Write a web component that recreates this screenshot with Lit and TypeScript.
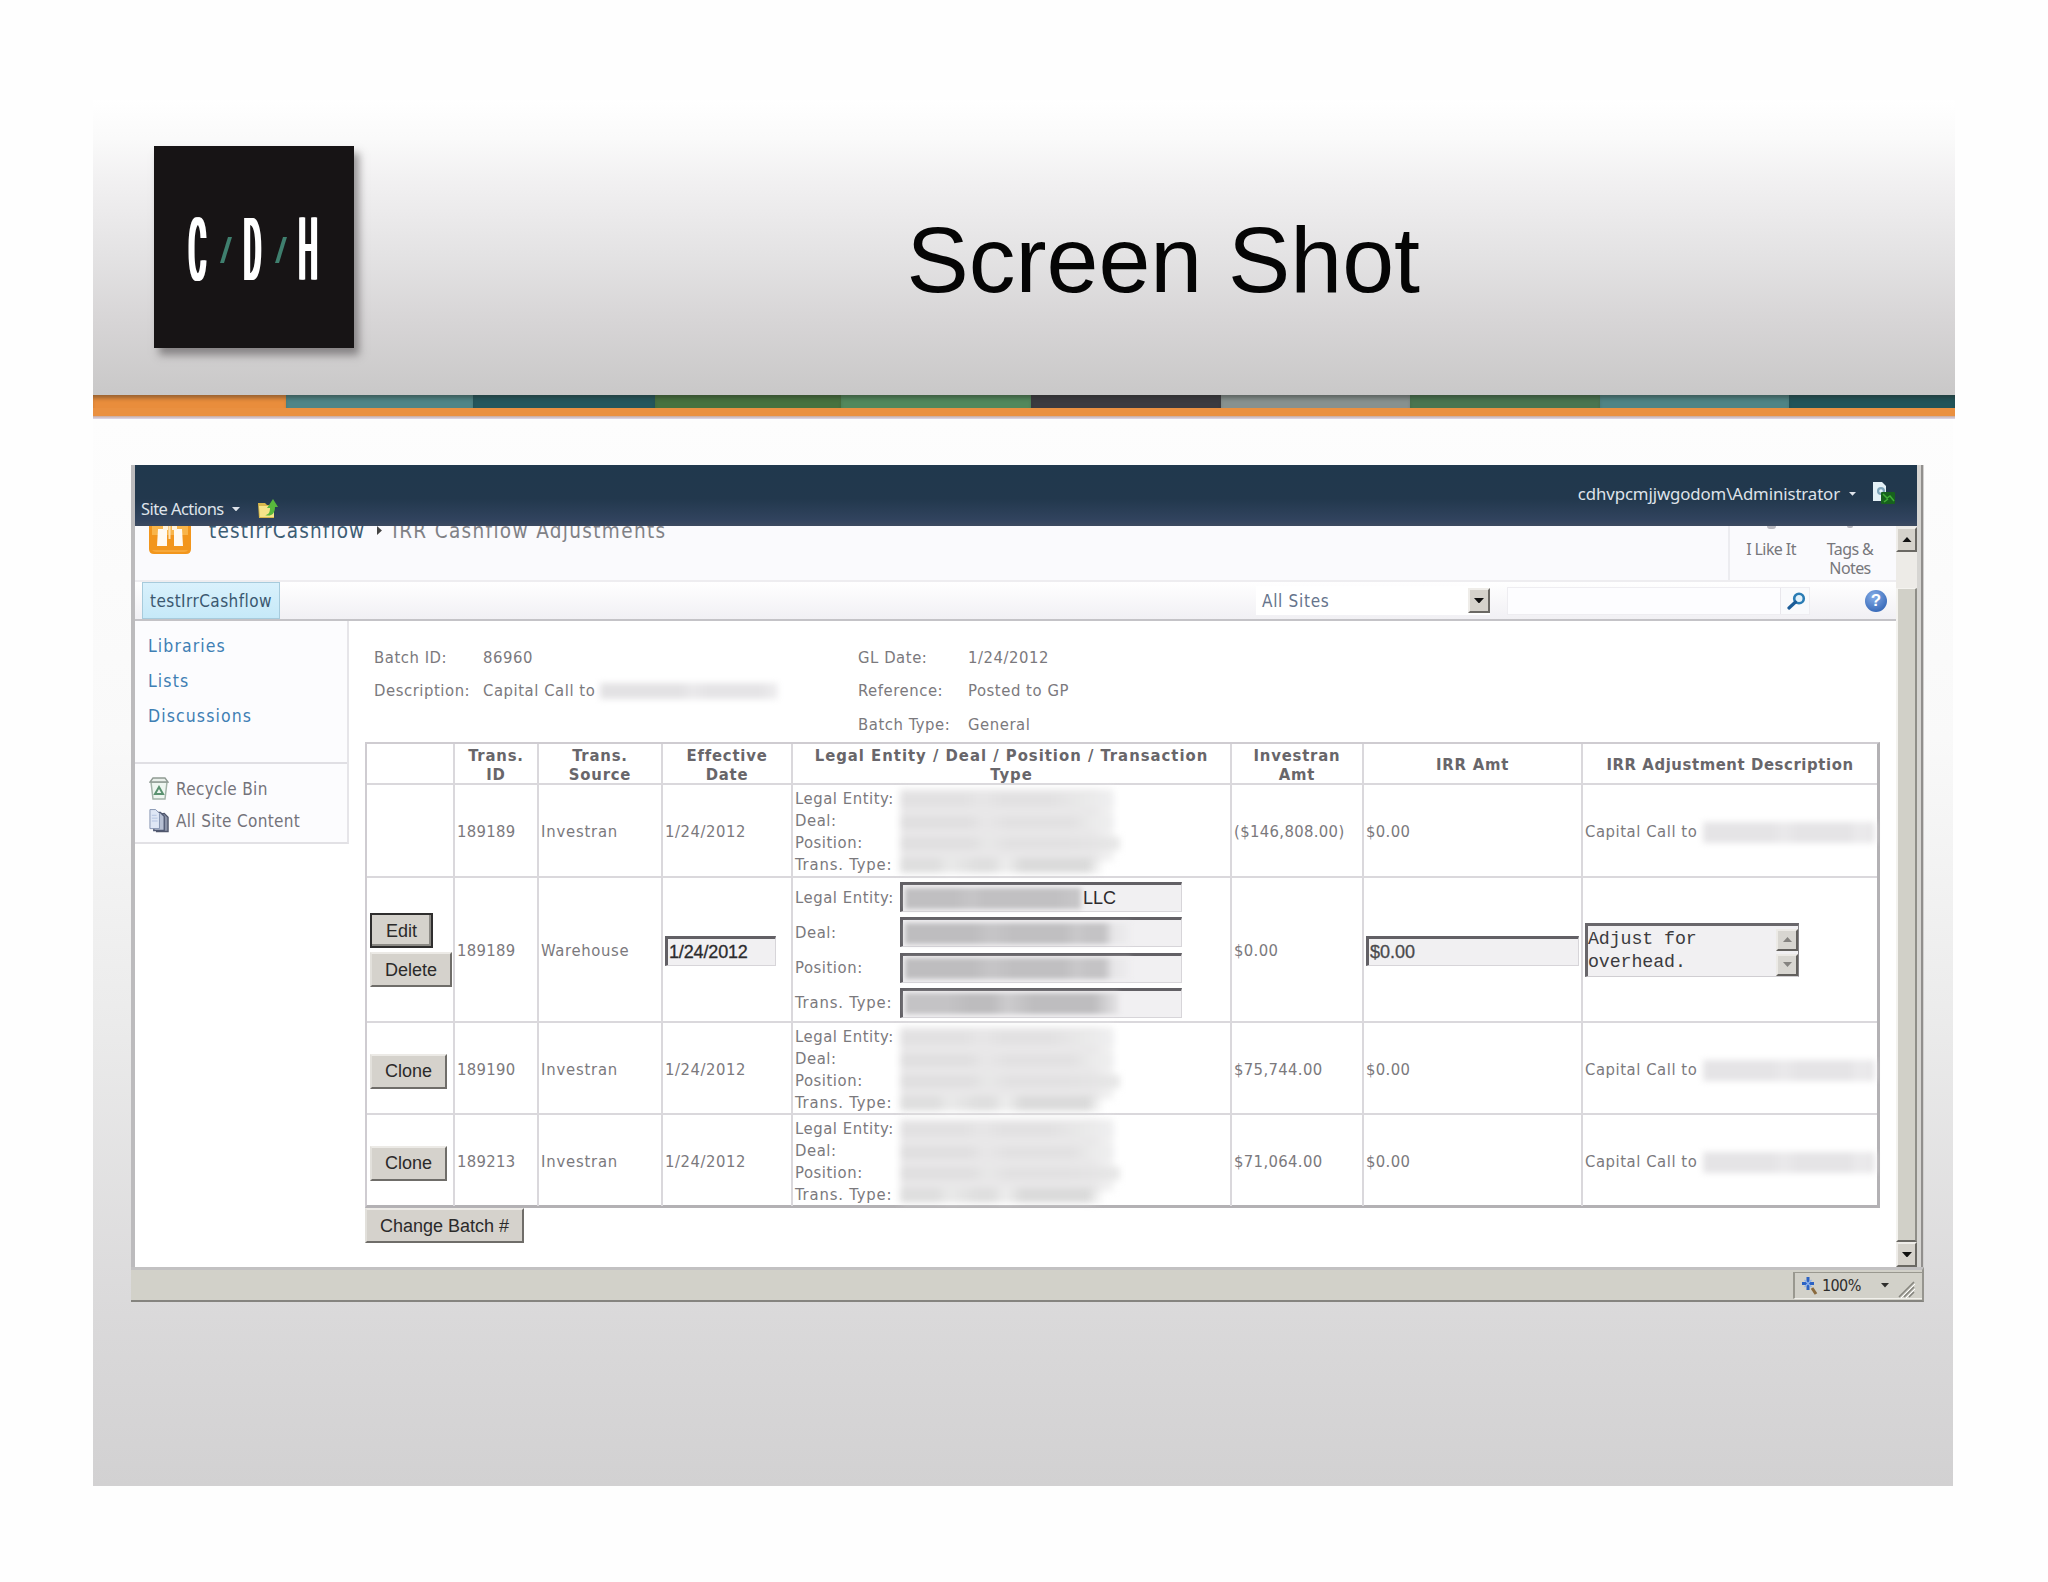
import { LitElement, html, svg, css, nothing } from "lit";
import { customElement, property } from "lit/decorators.js";

interface Row {
  id: string;
  source: string;
  date: string;
  amount: string;
  irr: string;
  note: string;
  kind: "plain" | "edit" | "clone";
}

const ROWS: Row[] = [
  { id: "189189", source: "Investran", date: "1/24/2012", amount: "($146,808.00)", irr: "$0.00", note: "Capital Call to", kind: "plain" },
  { id: "189189", source: "Warehouse", date: "1/24/2012", amount: "$0.00", irr: "$0.00", note: "Adjust for overhead.", kind: "edit" },
  { id: "189190", source: "Investran", date: "1/24/2012", amount: "$75,744.00", irr: "$0.00", note: "Capital Call to", kind: "clone" },
  { id: "189213", source: "Investran", date: "1/24/2012", amount: "$71,064.00", irr: "$0.00", note: "Capital Call to", kind: "clone" },
];

const PARTS = ["Legal Entity:", "Deal:", "Position:", "Trans. Type:"];

const folderIcon = svg`<svg width="22" height="22" viewBox="0 0 22 22">
  <path d="M1 5h7l2 2h7v13H2z" fill="#d9b84c"/><path d="M2 8h15v11H3z" fill="#f6e48a"/>
  <path d="M8 17c3 0 5-2 5-7h-3l6-9 5 8h-3c0 7-4 10-10 8z" fill="#58b83c"/></svg>`;

const pageIcon = svg`<svg width="24" height="26" viewBox="0 0 24 26">
  <path d="M1 1h9l4 4v15H1z" fill="#e4f1f7"/><circle cx="9" cy="10" r="4" fill="#7ea5bb"/><circle cx="9" cy="10" r="1.800" fill="#e4f1f7"/>
  <rect x="9" y="11" width="14" height="12" rx="1" fill="#17611d"/><path d="M11 13l4 4 3-2 4 5M12 21l4-3" stroke="#3fae35" stroke-width="1.500" fill="none"/></svg>`;

const siteIcon = svg`<svg width="42" height="29" viewBox="0 0 42 29">
  <path d="M0 0h42v23q0 5-5 5H5q-5 0-5-5z" fill="#f2961d"/><path d="M3 0h36v9H3z" fill="#f9b54a"/><path d="M3 24q2 2 4 2h28q3 0 4-2z" fill="#f7a83a"/>
  <path d="M9 3h9v17H8zM25 3h8l1 17h-9z" fill="#fffaf2"/>
  <path d="M14 0h5v4h-5zM23 0h5v4h-5z" fill="#fff3df"/><path d="M20.500 0v13" stroke="#fde2b5" stroke-width="2"/></svg>`;

const binIcon = svg`<svg width="20" height="24" viewBox="0 0 20 24">
  <path d="M2 5h16l-2 17H4z" fill="#eef6f0" stroke="#a3b3a8" stroke-width="1.500"/><path d="M1 5l3-4h12l3 4z" fill="#e9efea" stroke="#8f9a93" stroke-width="1.300"/>
  <path d="M10 10l4 7H6z" fill="none" stroke="#5a9270" stroke-width="2"/></svg>`;

const pagesIcon = svg`<svg width="21" height="26" viewBox="0 0 21 26">
  <path d="M10 6l6-1 4 4v15H8z" fill="#8b93a8" stroke="#4f566b" stroke-width="1.400"/><path d="M6 4h6l4 4v15H5z" fill="#b7c0d4" stroke="#4f5872" stroke-width="1.400"/>
  <path d="M1 1h6l4 4v16H1z" fill="#dfe7f5" stroke="#8492b0"/><path d="M3 7h5M3 10h6M3 13h6" stroke="#b3c3e0"/></svg>`;

const searchIcon = svg`<svg width="20" height="18" viewBox="0 0 20 18">
  <circle cx="13" cy="6.500" r="4.800" fill="#e3f2fb" stroke="#2a7cb4" stroke-width="2.600"/><path d="M9.500 10L3 16" stroke="#1b5c98" stroke-width="3.200" stroke-linecap="round"/></svg>`;

const gripIcon = svg`<svg width="17" height="17" viewBox="0 0 17 17"><path d="M1 16L16 1M6 16L16 6M11 16l5-5" stroke="#86857e" stroke-width="1.600"/><path d="M3 17L17 3M8 17l9-9" stroke="#fff"/></svg>`;

const zoomIcon = svg`<svg width="18" height="20" viewBox="0 0 18 20"><path d="M7 1v13M1 7.500h12" stroke="#2b62c4" stroke-width="3"/><path d="M3.500 4l7 7M10.500 4l-7 7" stroke="#8db2ea" stroke-width="1.200"/><path d="M11 12l4 6" stroke="#8a6a3d" stroke-width="3"/></svg>`;

@customElement("arrow-glyph")
class ArrowGlyph extends LitElement {
  @property() dir: "up" | "down" = "down";
  static styles = css`
    :host { display: inline-flex; }
    svg { width: 1em; height: 0.55em; display: block; fill: currentColor; }
  `;
  render() {
    return html`<svg viewBox="0 0 10 6" preserveAspectRatio="none"><path d=${this.dir === "down" ? "M0 0h10L5 6z" : "M0 6h10L5 0z"}></path></svg>`;
  }
}

@customElement("slide-header")
class SlideHeader extends LitElement {
  static styles = css`
    :host { display: block; }
    .top { height: 295px; display: flex; background: linear-gradient(#fff 0, #fafafa 13%, #f1f0f1 28%, #e4e3e4 52%, #d7d5d6 75%, #c9c8c8 100%); }
    .logo { width: 200px; height: 202px; margin: 46px 0 0 61px; background: #171415; box-shadow: 5px 7px 8px rgba(60, 55, 58, 0.5); }
    .mark { display: flex; align-items: center; height: 63px; margin: 72px 0 0 34px; }
    .letter { width: 21px; height: 63px; line-height: 63px; font-family: Roboto, sans-serif; font-size: 88px; color: #fff; }
    .letter span { display: inline-block; transform: translateX(-1px) scaleX(0.3); transform-origin: 0 50%; text-shadow: 4px 0 #fff, 8px 0 #fff, 12px 0 #fff; }
    .slash { width: 4px; height: 26px; margin: 0 15px 0 15px; background: #3f7f6e; transform: skewX(-17deg); }
    .title { flex: 1; padding-right: 535px; text-align: right; font: 93.300px/320px "Liberation Sans", Arial, sans-serif; color: #050505; }
    .strip { height: 13px; display: grid; grid-template-columns: 193px 187px 182px 186px 190px 190px 189px 190px 189px 166px; }
    .strip div { box-shadow: inset 0 5px 4px -2px rgba(35, 35, 30, 0.42); }
    .s0 { background: #e98d3c; } .s1 { background: #4f8587; } .s2 { background: #24575d; } .s3 { background: #47723f; } .s4 { background: #52885c; }
    .s5 { background: #3b3b40; } .s6 { background: #87918f; } .s7 { background: #497550; } .s8 { background: #4f8485; } .s9 { background: #225459; }
    .orange { height: 8px; background: #ea9040; }
    .edge { height: 3px; background: linear-gradient(#c9a99a, #dcd8ee); }
  `;
  render() {
    return html`
      <div class="top">
        <div class="logo"><div class="mark">
          <div class="letter"><span>C</span></div><div class="slash"></div>
          <div class="letter"><span>D</span></div><div class="slash"></div>
          <div class="letter"><span>H</span></div>
        </div></div>
        <div class="title">Screen Shot</div>
      </div>
      <div class="strip">${[0, 1, 2, 3, 4, 5, 6, 7, 8, 9].map((n) => html`<div class="s${n}"></div>`)}</div>
      <div class="orange"></div><div class="edge"></div>`;
  }
}

@customElement("cashflow-table")
class CashflowTable extends LitElement {
  static styles = css`
    :host { display: block; width: 1515px; font: 16.500px/22px "DejaVu Sans Condensed", "DejaVu Sans", sans-serif; font-stretch: condensed; color: #7b797d; }
    .table { border: 2px solid #cfccd1; border-right: 3px solid #b3b1b4; border-bottom: 3px solid #b3b1b4; box-sizing: border-box; width: 1515px; }
    .row { display: grid; grid-template-columns: 88px 84px 124px 130px 439px 132px 219px 294px; border-bottom: 2px solid #dad8dc; box-sizing: border-box; }
    .row:last-child { border-bottom: 0; }
    .head { height: 41px; } .plain { height: 93px; } .edit { height: 145px; } .clone { height: 92px; } .row:last-child { height: 90px; }
    .cell { border-right: 2px solid #dad8dc; display: flex; align-items: center; padding: 3px 0 0 2px; white-space: nowrap; min-width: 0; }
    .cell:last-child { border-right: 0; }
    .head .cell { padding: 3px 0 0; justify-content: center; text-align: center; font-weight: bold; line-height: 18.500px; color: #68666a; letter-spacing: 0.800px; }
    .head .cell:nth-child(5) { letter-spacing: 1px; } .head .cell:nth-child(8) { letter-spacing: 0.600px; }
    .row .buttons { flex-direction: column; align-items: flex-start; justify-content: center; gap: 4px; padding: 0 0 1px 3px; }
    .clone .buttons { padding-top: 6px; }
    .btn { box-sizing: border-box; height: 35px; padding: 0 13px; display: inline-flex; align-items: center; font: 18px/20px "Liberation Sans", Arial, sans-serif; color: #2b2a2a; background: #d5d2cc; border: 2px solid; border-color: #eceae6 #6f6d69 #6f6d69 #e2e0db; white-space: nowrap; }
    .btn.focus { padding: 0 14px; border: 2px solid #2f2e2e; box-shadow: inset -2px -2px #8b8984; }
    .parts { display: grid; grid-template-columns: 105px auto; align-items: center; letter-spacing: 0.550px; }
    .parts .last { letter-spacing: 0.850px; }
    .plain .parts, .clone .parts { grid-template-rows: repeat(4, 22px); }
    .edit .cell { padding-top: 2px; }
    .edit .parts { grid-template-rows: repeat(4, 35.200px); }
    .redacted { grid-column: 2; grid-row: 1 / 5; width: 222px; height: 86px; filter: blur(3.500px); background:
      linear-gradient(90deg, #e2e1e2 0 30%, #e7e6e7 38%, #e2e1e2 48% 70%, #e9e9e9 85%, #efeff0) 0 4px / 214px 14px no-repeat,
      linear-gradient(90deg, #e0dfe0 0 32%, #e8e7e8 40%, #e2e1e2 50% 80%, #ebebeb 90%, #efeff0) 0 27px / 214px 13px no-repeat,
      linear-gradient(90deg, #e0dfe0 0 32%, #e8e8e8 40%, #e2e1e2 50% 75%, #e7e7e7) 0 48px / 220px 13px no-repeat,
      linear-gradient(90deg, #dedede 0 18%, #eaeaea 24%, #dedede 38% 45%, #eeeeee 52%, #dadada 60% 92%, transparent) 0 69px / 204px 15px no-repeat,
      linear-gradient(90deg, #e9e8e9 0 90%, #f3f3f3) 0 0 / 214px 72px no-repeat; }
    .field { box-sizing: border-box; height: 30px; display: flex; align-items: center; background: #f1f0f2; border: 3px solid #626065; border-right: 1px solid #d7d5d9; border-bottom: 1px solid #d7d5d9; font: 18px/20px "Liberation Sans", Arial, sans-serif; letter-spacing: 0; color: #2c2b2d; }
    .field.part { width: 282px; margin-top: -1px; }
    .mask { width: 176px; height: 21px; filter: blur(2.500px); margin-left: 2px; background: linear-gradient(90deg, #c0bfc1 0 28%, #c6c5c7 38%, #c1c0c2 45% 85%, #c8c7c9); }
    .mask.long { width: 226px; background: linear-gradient(90deg, #bebdbf 0 30%, #c6c5c7 38%, #c0bfc1 48% 70%, #c9c8ca 76%, #c4c3c5 82% 88%, #e6e5e7 92%, #efeef0); }
    .mask.split { width: 214px; background: linear-gradient(90deg, #c4c3c5 0 20%, #bdbcbe 30% 40%, #cccbcd 48%, #bebdbf 60% 88%, #e6e5e7); }
    .llc { margin-left: 2px; }
    .field.date { width: 111px; padding-left: 1px; letter-spacing: -0.150px; }
    .field.amt { width: 213px; padding-left: 1px; color: #4a494c; -webkit-text-stroke: 0.300px #4a494c; }
    .field.date { -webkit-text-stroke: 0.300px #2c2b2d; }
    .area { box-sizing: border-box; width: 214px; height: 54px; margin-top: -2px; display: flex; justify-content: space-between; background: #f1f0f2; border: 3px solid #69676b; border-right: 1px solid #848286; border-bottom: 1px solid #d0ced2; }
    .area-text { width: 130px; white-space: normal; font: 18.300px/23px "Liberation Mono", "Courier New", monospace; letter-spacing: -0.100px; color: #3c3b3e; padding-top: 2px; }
    .area-scroll { display: flex; flex-direction: column; justify-content: space-between; padding-top: 3px; }
    .mini { box-sizing: border-box; width: 22px; height: 22px; display: flex; align-items: center; justify-content: center; font-size: 9px; color: #858380; background: #d8d6d1; border: 2px solid; border-color: #eceae6 #62605d #62605d #eceae6; }
    .smear { width: 172px; height: 21px; margin-left: 6px; filter: blur(3px); background: linear-gradient(90deg, #e5e4e6 0 40%, #eae9eb 47%, #e5e4e6 55% 85%, #ebeaec 90%, #e8e7e9); }
    .id { letter-spacing: 0.300px; } .source { letter-spacing: 0.800px; } .edit .source { letter-spacing: 0.650px; }
    .when { letter-spacing: 0.550px; } .money { letter-spacing: 0.350px; } .note { letter-spacing: 0.550px; }
  `;

  private cellButtons(r: Row) {
    if (r.kind === "edit") return html`<div class="btn focus">Edit</div><div class="btn">Delete</div>`;
    return r.kind === "clone" ? html`<div class="btn">Clone</div>` : nothing;
  }

  private cellParts(r: Row) {
    const label = (p: string, i: number) => html`<div class=${i === 3 ? "last" : "part-name"}>${p}</div>`;
    if (r.kind !== "edit") return html`${PARTS.map(label)}<div class="redacted"></div>`;
    const masks = ["", "long", "long", "split"];
    return PARTS.map((p, i) => html`${label(p, i)}<div class="field part"><div class="mask ${masks[i]}"></div>${i === 0 ? html`<span class="llc">LLC</span>` : nothing}</div>`);
  }

  render() {
    const edit = (r: Row) => r.kind === "edit";
    return html`
      <div class="table">
        <div class="row head">
          <div class="cell"></div><div class="cell">Trans.<br />ID</div><div class="cell">Trans.<br />Source</div>
          <div class="cell">Effective<br />Date</div><div class="cell">Legal Entity / Deal / Position / Transaction<br />Type</div>
          <div class="cell">Investran<br />Amt</div><div class="cell">IRR Amt</div><div class="cell">IRR Adjustment Description</div>
        </div>
        ${ROWS.map((r) => html`
          <div class="row ${r.kind}">
            <div class="cell buttons">${this.cellButtons(r)}</div>
            <div class="cell id">${r.id}</div>
            <div class="cell source">${r.source}</div>
            <div class="cell when">${edit(r) ? html`<div class="field date">${r.date}</div>` : r.date}</div>
            <div class="cell"><div class="parts">${this.cellParts(r)}</div></div>
            <div class="cell money">${r.amount}</div>
            <div class="cell money">${edit(r) ? html`<div class="field amt">${r.irr}</div>` : r.irr}</div>
            <div class="cell note">${edit(r)
              ? html`<div class="area"><div class="area-text">${r.note}</div><div class="area-scroll">
                  <div class="mini"><arrow-glyph dir="up"></arrow-glyph></div><div class="mini"><arrow-glyph></arrow-glyph></div></div></div>`
              : html`${r.note}<div class="smear"></div>`}</div>
          </div>`)}
      </div>
      <div class="btn">Change Batch #</div>`;
  }
}

@customElement("browser-window")
class BrowserWindow extends LitElement {
  static styles = css`
    :host { display: block; box-sizing: border-box; width: 1793px; height: 837px; font: 16.500px/22px "DejaVu Sans Condensed", "DejaVu Sans", sans-serif; font-stretch: condensed; color: #7b797d; white-space: nowrap; background: #fff; }
    .main { display: flex; height: 802px; background: linear-gradient(90deg, #bcbbbd 0 4px, #fff 4px 1786px, #d6d5d2 1786px 1790px, #918f8d 1790px 1792px, #d2d1d0 1792px); padding: 0 7px 0 4px; box-sizing: border-box; }
    .col { width: 1782px; }
    .ribbon { height: 61px; display: flex; background: linear-gradient(#20384d 0, #22384d 55%, #31435e 90%, #3c4a60 100%); color: #dfe3ea; font-family: "Noto Sans", sans-serif; font-stretch: normal; font-size: 16.500px; }
    .actions { display: flex; align-items: center; padding: 27px 0 0 6px; letter-spacing: -0.580px; box-sizing: border-box; height: 61px; }
    .actions arrow-glyph { font-size: 8px; margin: 0 17px 0 8px; }
    .user { margin-left: auto; display: flex; align-items: center; height: 58px; padding-right: 21px; letter-spacing: -0.100px; font-size: 16.800px; }
    .user arrow-glyph { font-size: 7px; margin: 0 16px 0 9px; }
    .body { display: flex; height: 741px; }
    .page { width: 1761px; }
    .crumb { height: 56px; display: flex; overflow: hidden; background: #fafafd; border-bottom: 2px solid #eeedf0; box-sizing: border-box; font-size: 20.500px; line-height: 24px; }
    .crumb svg { margin: 0 18px 0 14px; flex: none; }
    .crumb .site, .crumb .here { margin-top: -7px; }
    .crumb .site { color: #3d5d74; letter-spacing: 1.150px; }
    .crumb .sep { font-size: 9px; transform: rotate(-90deg); margin: 2px 8px 0 10px; color: #444; height: 5px; }
    .crumb .here { color: #808186; letter-spacing: 1.350px; }
    .social { margin-left: auto; display: flex; width: 166px; border-left: 2px solid #ececf0; font: 16px/19px "Noto Sans", sans-serif; letter-spacing: -0.600px; color: #77777b; text-align: center; }
    .like, .tags { display: flex; flex-direction: column; align-items: center; gap: 11px; }
    .like { width: 80px; margin-left: 1px; } .tags { width: 70px; margin-left: 4px; }
    .tip { width: 9px; height: 3px; border-radius: 0 0 5px 5px; background: #b9b9c0; } .tags .tip { width: 6px; height: 2px; margin-bottom: 1px; }
    .bar { height: 39px; box-sizing: border-box; display: flex; align-items: center; background: linear-gradient(#fff, #f1f0f4); border-bottom: 2px solid #c4c3c7; }
    .tab { box-sizing: border-box; width: 138px; height: 37px; margin-left: 7px; border: 1px solid #a7cbdc; background: linear-gradient(#d9f1fc, #c6e9f8); color: #3b5870; display: flex; align-items: center; justify-content: center; font-size: 17px; letter-spacing: 0.450px; }
    .select { margin-left: 976px; width: 234px; height: 29px; display: flex; justify-content: space-between; align-items: center; background: #fff; color: #66748c; font-size: 17px; letter-spacing: 0.700px; padding-left: 6px; box-sizing: border-box; }
    .square { box-sizing: border-box; width: 22px; height: 25px; display: flex; align-items: center; justify-content: center; font-size: 10px; color: #111; background: #d5d2cb; border: 2px solid; border-color: #efede9 #6b6964 #6b6964 #efede9; }
    .search { margin-left: 17px; width: 303px; height: 28px; box-sizing: border-box; border: 1px solid #eeedf1; background: linear-gradient(90deg, #fdfdff 272px, #e8e7ec 272px, #e8e7ec 273px, #f9fafc 273px); display: flex; justify-content: flex-end; align-items: center; padding-right: 3px; }
    .help { width: 22px; height: 22px; border-radius: 50%; margin-left: 55px; background: radial-gradient(circle at 40% 30%, #86aee8, #3b6cba 75%); color: #fff; font: bold 17px/22px "Liberation Sans", sans-serif; text-align: center; }
    .lower { display: flex; }
    .side { width: 214px; height: 223px; box-sizing: border-box; background: #fcfcfe; border-right: 2px solid #e6e5e9; border-bottom: 2px solid #e2e1e5; }
    .links { height: 143px; box-sizing: border-box; padding: 8px 0 0 13px; border-bottom: 2px solid #e0dfe4; color: #3f7fb4; font-size: 17.500px; line-height: 35.200px; letter-spacing: 1.100px; }
    .tools { padding: 9px 0 0 14px; color: #74737a; font-size: 17px; letter-spacing: 0.330px; }
    .tool { display: flex; align-items: center; height: 32px; gap: 7px; }
    .tool svg { width: 20px; }
    .content { padding: 20px 0 0 16px; }
    .info { display: grid; grid-template-columns: 109px 375px 110px auto; grid-auto-rows: 33.500px; padding-left: 9px; align-items: center; height: 101px; letter-spacing: 0.550px; }
    .value { display: flex; align-items: center; }
    .smear { width: 178px; height: 16px; margin-left: 5px; filter: blur(3px); background: linear-gradient(90deg, #e3e2e4 0 45%, #eae9eb 52%, #e5e4e6 60% 90%, #efeef0); }
    .scroll { width: 21px; display: flex; flex-direction: column; background: #edebe7; padding-top: 1px; box-sizing: border-box; }
    .scroll .square { width: 21px; height: 25px; flex: none; }
    .thumb { margin-top: 36px; flex: 1; background: #d1d0c8; border-right: 2px solid #8f8e88; border-left: 2px solid #f4f3ef; border-top: 1px solid #f4f3ef; border-bottom: 2px solid #6b6964; }
    .status { box-sizing: border-box; height: 35px; background: #d2d1c9; border-top: 3px solid #c2c1c2; border-bottom: 2px solid #85847f; border-right: 2px solid #96958f; display: flex; justify-content: flex-end; }
    .zoom { box-sizing: border-box; width: 129px; height: 27px; margin-top: 2px; border-left: 2px solid #99988f; border-top: 1px solid #99988f; border-bottom: 1px solid #f2f1ec; display: flex; align-items: center; color: #2e2e2c; font: 16px/20px "DejaVu Sans Condensed", sans-serif; letter-spacing: -0.600px; padding-left: 6px; }
    .zoom span { margin-left: 3px; } .zoom arrow-glyph { font-size: 8px; margin: 0 9px 0 20px; }
    .zoom .grip { align-self: flex-end; height: 17px; display: flex; }
  `;
  render() {
    return html`
      <div class="main">
        <div class="col">
          <div class="ribbon">
            <div class="actions">Site Actions<arrow-glyph></arrow-glyph>${folderIcon}</div>
            <div class="user">cdhvpcmjjwgodom\\Administrator<arrow-glyph></arrow-glyph>${pageIcon}</div>
          </div>
          <div class="body">
            <div class="page">
              <div class="crumb">${siteIcon}<span class="site">testIrrCashflow</span><arrow-glyph class="sep" dir="down"></arrow-glyph><span class="here">IRR Cashflow Adjustments</span>
                <div class="social"><div class="like"><div class="tip"></div>I Like It</div><div class="tags"><div class="tip"></div><div>Tags &amp;<br />Notes</div></div></div>
              </div>
              <div class="bar">
                <div class="tab">testIrrCashflow</div>
                <div class="select">All Sites<div class="square"><arrow-glyph></arrow-glyph></div></div>
                <div class="search">${searchIcon}</div>
                <div class="help">?</div>
              </div>
              <div class="lower">
                <div class="side">
                  <div class="links"><div>Libraries</div><div>Lists</div><div>Discussions</div></div>
                  <div class="tools"><div class="tool">${binIcon}Recycle Bin</div><div class="tool">${pagesIcon}All Site Content</div></div>
                </div>
                <div class="content">
                  <div class="info">
                    <div>Batch ID:</div><div>86960</div><div>GL Date:</div><div>1/24/2012</div>
                    <div>Description:</div><div class="value">Capital Call to<div class="smear"></div></div><div>Reference:</div><div>Posted to GP</div>
                    <div></div><div></div><div>Batch Type:</div><div>General</div>
                  </div>
                  <cashflow-table></cashflow-table>
                </div>
              </div>
            </div>
            <div class="scroll">
              <div class="square"><arrow-glyph dir="up"></arrow-glyph></div>
              <div class="thumb"></div>
              <div class="square"><arrow-glyph></arrow-glyph></div>
            </div>
          </div>
        </div>
      </div>
      <div class="status"><div class="zoom">${zoomIcon}<span>100%</span><arrow-glyph></arrow-glyph><div class="grip">${gripIcon}</div></div></div>`;
  }
}

@customElement("app-root")
class AppRoot extends LitElement {
  static styles = css`
    :host { display: block; box-sizing: border-box; width: 2048px; height: 1582px; padding: 100px 93px 0; background: #fefefe; overflow: hidden; }
    .stage { width: 1860px; height: 1067px; box-sizing: border-box; padding: 46px 0 0 38px; background: linear-gradient(#fdfdfd 0, #f9f9f9 30%, #ececec 55%, #dad9da 84%, #d2d1d2 100%); }
  `;
  render() {
    return html`<slide-header></slide-header><div class="stage"><browser-window></browser-window></div>`;
  }
}
